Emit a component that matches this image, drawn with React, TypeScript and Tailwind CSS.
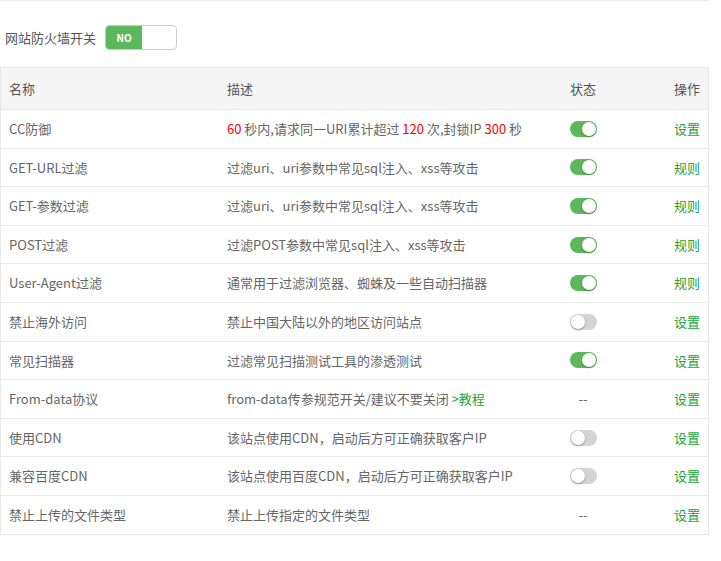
const rows = [
  {
    name: "CC防御",
    desc: (
      <>
        <span className="text-[#ff0000]">60</span> 秒内,请求同一URI累计超过{" "}
        <span className="text-[#ff0000]">120</span> 次,封锁IP{" "}
        <span className="text-[#ff0000]">300</span> 秒
      </>
    ),
    state: "on",
    action: "设置",
  },
  { name: "GET-URL过滤", desc: "过滤uri、uri参数中常见sql注入、xss等攻击", state: "on", action: "规则" },
  { name: "GET-参数过滤", desc: "过滤uri、uri参数中常见sql注入、xss等攻击", state: "on", action: "规则" },
  { name: "POST过滤", desc: "过滤POST参数中常见sql注入、xss等攻击", state: "on", action: "规则" },
  { name: "User-Agent过滤", desc: "通常用于过滤浏览器、蜘蛛及一些自动扫描器", state: "on", action: "规则" },
  { name: "禁止海外访问", desc: "禁止中国大陆以外的地区访问站点", state: "off", action: "设置" },
  { name: "常见扫描器", desc: "过滤常见扫描测试工具的渗透测试", state: "on", action: "设置" },
  {
    name: "From-data协议",
    desc: (
      <>
        from-data传参规范开关/建议不要关闭 <span className="text-[#20a53a]">&gt;教程</span>
      </>
    ),
    state: "none",
    action: "设置",
  },
  { name: "使用CDN", desc: "该站点使用CDN，启动后方可正确获取客户IP", state: "off", action: "设置" },
  { name: "兼容百度CDN", desc: "该站点使用百度CDN，启动后方可正确获取客户IP", state: "off", action: "设置" },
  { name: "禁止上传的文件类型", desc: "禁止上传指定的文件类型", state: "none", action: "设置" },
]

function Switch({ on }: { on: boolean }) {
  return (
    <div
      className={`relative h-[16px] w-[27px] rounded-full ${on ? "bg-[#5cb85c]" : "bg-[#d4d4d4]"}`}
    >
      <div
        className={`absolute top-[1px] h-[14px] w-[14px] rounded-full bg-white shadow-[0_1px_2px_rgba(0,0,0,0.35)] ${
          on ? "left-[12px]" : "left-[1px]"
        }`}
      />
    </div>
  )
}

export default function App() {
  return (
    <div
      className="h-[561px] w-[721px] bg-white text-[13px] text-[#666]"
      style={{ fontFamily: '"Microsoft YaHei", "Noto Sans CJK SC", sans-serif' }}
    >
      <div className="w-[709px] border-t border-[#eee] pt-[24px]">
        <div className="flex items-center pl-[5px]">
          <span className="text-[#555]">网站防火墙开关</span>
          <div className="ml-[9px] flex h-[25px] w-[72px] overflow-hidden rounded-[4px] border border-[#ccc]">
            <div className="flex w-[36px] items-center justify-center bg-[#5cb85c] text-[10px] font-bold text-white">
              NO
            </div>
          </div>
        </div>

        <div className="mt-[17px] border border-[#e8e8e8]">
          <div className="flex h-[41px] items-center bg-[#f5f5f5] text-[#555]">
            <div className="w-[218px] pl-[8px]">名称</div>
            <div className="flex-1 pl-[8px]">描述</div>
            <div className="w-[90px] text-center">状态</div>
            <div className="w-[80px] pr-[8px] text-right">操作</div>
          </div>
          {rows.map((r, i) => (
            <div key={i} className="flex h-[38.6px] items-center border-t border-[#eaeaea]">
              <div className="w-[218px] pl-[8px]">{r.name}</div>
              <div className="flex-1 pl-[8px]">{r.desc}</div>
              <div className="flex w-[90px] justify-center">
                {r.state === "none" ? <span>--</span> : <Switch on={r.state === "on"} />}
              </div>
              <div className="w-[80px] pr-[8px] text-right text-[#20a53a]">{r.action}</div>
            </div>
          ))}
        </div>
      </div>
    </div>
  )
}
